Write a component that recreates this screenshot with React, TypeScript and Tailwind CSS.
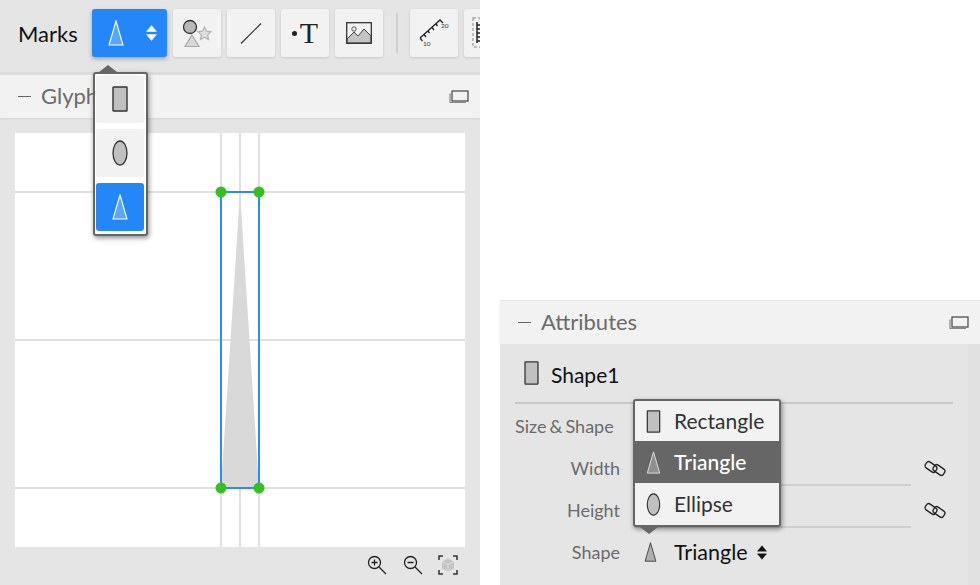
const font = { fontFamily: "Lato, 'Open Sans', sans-serif" };

const RectIcon = ({ w = 16, h = 26, fill = "#c0c0c0" }: { w?: number; h?: number; fill?: string }) => (
  <svg width={w} height={h} viewBox="0 0 16 26">
    <rect x="1" y="1" width="14" height="24" rx="0.5" fill={fill} stroke="#333" strokeWidth="1.4" />
  </svg>
);

const EllipseIcon = ({ w = 16, h = 26 }: { w?: number; h?: number }) => (
  <svg width={w} height={h} viewBox="0 0 16 26">
    <ellipse cx="8" cy="13" rx="7" ry="12" fill="#c0c0c0" stroke="#333" strokeWidth="1.3" />
  </svg>
);

const TriangleIcon = ({ w = 16, h = 26, stroke = "#fff", fill = "#5ba6f9" }: { w?: number; h?: number; stroke?: string; fill?: string }) => (
  <svg width={w} height={h} viewBox="0 0 16 26">
    <path d="M8 1 L15 25 L1 25 Z" fill={fill} stroke={stroke} strokeWidth="1.1" />
  </svg>
);

const UpDown = ({ color = "#fff", w = 11, h = 16 }: { color?: string; w?: number; h?: number }) => (
  <svg width={w} height={h} viewBox="0 0 11 16">
    <path d="M5.5 0.5 L10.5 6.5 L0.5 6.5 Z M0.5 9.5 L10.5 9.5 L5.5 15.5 Z" fill={color} stroke={color} strokeWidth="0.5" strokeLinejoin="round" />
  </svg>
);

const Minimize = () => <div className="w-[13px] h-px bg-[#666]" />;

const PanelIcon = () => (
  <svg width="20" height="14" viewBox="0 0 20 14" fill="none">
    <path d="M1 3.5 V12.5 H17" stroke="#888" strokeWidth="1.2" />
    <rect x="3" y="1" width="16" height="10" stroke="#444" strokeWidth="1.2" fill="none" />
  </svg>
);

const ToolButton = ({ children }: { children: React.ReactNode }) => (
  <div className="w-12 h-12 shrink-0 rounded-[3px] bg-[#f2f2f2] shadow-[0_1px_3px_rgba(0,0,0,0.12)] flex items-center justify-center">
    {children}
  </div>
);

const LinkIcon = () => (
  <svg width="22" height="17" viewBox="0 0 22 17" fill="none" stroke="#222" strokeWidth="1.3">
    <rect x="1" y="3.5" width="12" height="7" rx="2.5" transform="rotate(35 7 7)" />
    <rect x="9" y="6.5" width="12" height="7" rx="2.5" transform="rotate(35 15 10)" />
  </svg>
);

const Panel = ({ title }: { title: string }) => (
  <div className="h-[43px] shrink-0 bg-[#f2f2f2] flex items-center pl-[18px] pr-[11px] shadow-[0_1px_2px_rgba(0,0,0,0.08)]">
    <Minimize />
    <span className="ml-[10px] text-[22px] text-[#6b6b6b] pb-[2px]">{title}</span>
    <div className="ml-auto flex">
      <PanelIcon />
    </div>
  </div>
);

const Canvas = () => (
  <svg width="450" height="414" viewBox="0 0 450 414" className="block">
    <rect width="450" height="414" fill="#fff" />
    <g stroke="#e0e0e0" strokeWidth="2">
      <path d="M0 59 H450 M0 207 H450 M0 355 H450" />
      <path d="M206 0 V414 M225 0 V414 M244 0 V414" />
    </g>
    <path d="M225 59 L244 355 L206 355 Z" fill="#d9d9d9" />
    <rect x="206" y="59" width="38" height="296" fill="none" stroke="#2b8cf5" strokeWidth="2" />
    <g fill="#35c01f">
      <circle cx="206" cy="59" r="5.5" />
      <circle cx="244" cy="59" r="5.5" />
      <circle cx="206" cy="355" r="5.5" />
      <circle cx="244" cy="355" r="5.5" />
    </g>
  </svg>
);

const MarksMenu = () => (
  <div className="absolute left-[93px] top-[72px] w-[55px] h-[164px] bg-white border-2 border-[#666] rounded-[3px] shadow-[1px_2px_5px_rgba(0,0,0,0.45)] pl-px pr-[2px] pt-px flex flex-col gap-[6px]">
    <div className="absolute -top-[9px] left-[4px] w-0 h-0 border-l-[9px] border-r-[9px] border-b-[7px] border-l-transparent border-r-transparent border-b-[#666]" />
    <div className="h-12 rounded-[3px] bg-[#f2f2f2] flex items-center justify-center"><RectIcon /></div>
    <div className="h-12 rounded-[3px] bg-[#f2f2f2] flex items-center justify-center"><EllipseIcon /></div>
    <div className="h-12 rounded-[3px] bg-[#2387f7] flex items-center justify-center"><TriangleIcon /></div>
  </div>
);

const ShapeMenu = () => (
  <div className="absolute left-[133px] top-[55px] w-[148px] h-[128px] bg-[#f2f2f2] border-2 border-[#666] rounded-[3px] shadow-[1px_2px_5px_rgba(0,0,0,0.45)] text-[21px] text-[#333]">
    <div className="h-[40px] flex items-center pl-[11px] gap-[13px]"><RectIcon w={15} h={23} /><span>Rectangle</span></div>
    <div className="h-[42px] flex items-center pl-[11px] gap-[13px] bg-[#666] text-white font-medium">
      <TriangleIcon w={15} h={23} stroke="#ddd" fill="#909090" /><span>Triangle</span>
    </div>
    <div className="h-[42px] flex items-center pl-[11px] gap-[13px]"><EllipseIcon w={15} h={23} /><span>Ellipse</span></div>
    <div className="absolute -bottom-[9px] left-[5px] w-0 h-0 border-l-[9px] border-r-[9px] border-t-[7px] border-l-transparent border-r-transparent border-t-[#666]" />
  </div>
);

const Row = ({ label, children }: { label: string; children?: React.ReactNode }) => (
  <div className="h-[42px] flex items-center">
    <span className="w-[120px] shrink-0 text-right text-[18px] text-[#6b6b6b]">{label}</span>
    {children}
  </div>
);

export default function App() {
  return (
    <div className="w-[980px] h-[585px] bg-white flex overflow-hidden" style={font}>
      <div className="relative w-[480px] h-full bg-[#e5e5e5] flex flex-col overflow-hidden">
        <div className="h-[72px] shrink-0 flex items-center pl-[18px] pb-[6px]">
          <span className="w-[74px] shrink-0 text-[22px] text-[#111]">Marks</span>
          <div className="w-[75px] h-12 shrink-0 rounded-[3px] bg-[#2387f7] shadow-[0_2px_4px_rgba(0,0,0,0.3)] flex items-center pl-[16px] pr-[10px] justify-between">
            <TriangleIcon />
            <UpDown />
          </div>
          <div className="flex gap-[6px] ml-[6px] shrink-0">
            <ToolButton>
              <svg width="30" height="30" viewBox="0 0 30 30">
                <path d="M10 17 L17 28.5 L3 28.5 Z" fill="#d8d8d8" stroke="#aaa" strokeWidth="1.2" />
                <circle cx="8" cy="9" r="6.5" fill="#b8b8b8" stroke="#333" strokeWidth="1.3" />
                <path d="M22.5 9 L24.4 13.2 L29 13.8 L25.6 16.9 L26.6 21.5 L22.5 19.2 L18.4 21.5 L19.4 16.9 L16 13.8 L20.6 13.2 Z" fill="#e0e0e0" stroke="#b4b4b4" strokeWidth="1.2" />
              </svg>
            </ToolButton>
            <ToolButton>
              <svg width="22" height="22" viewBox="0 0 22 22"><path d="M1 21.5 L21 1.5" stroke="#333" strokeWidth="1.2" /></svg>
            </ToolButton>
            <ToolButton>
              <span className="flex items-center text-[#222]">
                <span className="w-[5px] h-[5px] rounded-full bg-[#222] mr-[3px]" />
                <span className="text-[30px] leading-none" style={{ fontFamily: "'Liberation Serif', serif" }}>T</span>
              </span>
            </ToolButton>
            <ToolButton>
              <svg width="26" height="22" viewBox="0 0 26 22">
                <path d="M1 17 L8 10 L12 14 L18 7 L25 14 V21 H1 Z" fill="#c4c4c4" stroke="#444" strokeWidth="1" />
                <rect x="0.7" y="0.7" width="24.6" height="20.6" fill="none" stroke="#333" strokeWidth="1.3" />
                <circle cx="8" cy="7" r="2.2" fill="none" stroke="#555" strokeWidth="1" />
              </svg>
            </ToolButton>
          </div>
          <div className="w-[2px] h-[40px] bg-[#cfcfcf] ml-[13px] mr-[12px] shrink-0" />
          <div className="flex gap-[6px] shrink-0">
            <ToolButton>
              <span className="relative w-8 h-8 flex">
                <svg width="32" height="32" viewBox="0 0 32 32" fill="none" stroke="#222" strokeWidth="1.3">
                  <path d="M2 21 L22 3 L25 6 M2 21 L4.5 24 M6 17.5 L8 20 M10 14 L11.5 16 M14 10.5 L16 13 M18 7 L19.5 9" />
                  <text x="23" y="11" fontSize="6.5" fill="#333" stroke="none" style={font}>20</text>
                  <text x="5" y="29" fontSize="6.5" fill="#333" stroke="none" style={font}>10</text>
                </svg>
              </span>
            </ToolButton>
            <ToolButton>
              <svg width="48" height="48" viewBox="0 0 48 48" fill="none">
                <rect x="9" y="9" width="30" height="29" stroke="#aaa" strokeWidth="1.5" strokeDasharray="3 2" />
                <path d="M13 13 V34" stroke="#222" strokeWidth="1.5" />
                <path d="M13 16 H16 M13 20 H16 M13 24 H16 M13 28 H16 M13 32 H16" stroke="#222" strokeWidth="1.5" />
              </svg>
            </ToolButton>
          </div>
        </div>
        <div className="h-[3px] shrink-0 bg-[#dcdcdc]" />
        <Panel title="Glyph" />
        <div className="pt-[15px] px-[15px]">
          <Canvas />
        </div>
        <div className="flex justify-end items-center gap-[14px] pr-[22px] pt-[7px]">
          <svg width="22" height="22" viewBox="0 0 22 22" fill="none" stroke="#222" strokeWidth="1.3">
            <circle cx="8.5" cy="8.5" r="6" />
            <path d="M5.5 8.5 H11.5 M8.5 5.5 V11.5 M13 13 L20 20" />
          </svg>
          <svg width="22" height="22" viewBox="0 0 22 22" fill="none" stroke="#222" strokeWidth="1.3">
            <circle cx="8.5" cy="8.5" r="6" />
            <path d="M5.5 8.5 H11.5 M13 13 L20 20" />
          </svg>
          <svg width="20" height="20" viewBox="0 0 20 20" fill="none">
            <path d="M1 5 V1 H5 M15 1 H19 V5 M19 15 V19 H15 M5 19 H1 V15" stroke="#333" strokeWidth="1.5" />
            <path d="M10 3.5 L16 6.5 V13.5 L10 16.5 L4 13.5 V6.5 Z" fill="#c4c4c4" />
            <path d="M4 6.5 L10 9.5 L16 6.5 M10 9.5 V16.5" stroke="#e5e5e5" strokeWidth="0.8" />
          </svg>
        </div>
        <MarksMenu />
      </div>

      <div className="w-5 shrink-0" />

      <div className="w-[480px] h-full flex flex-col pt-[300px]">
        <div className="h-px bg-[#e6e6e6]" />
        <Panel title="Attributes" />
        <div className="relative flex-1 bg-[#e5e5e5] border-r-[12px] border-[#e1e1e1]">
          <div className="h-[60px] mx-[15px] w-[438px] flex items-center border-b-2 border-[#c8c8c8] pl-[9px] gap-[12px]">
            <RectIcon w={15} h={24} />
            <span className="text-[21px] text-[#111] mt-[3px]">Shape1</span>
          </div>
          <div className="pl-[15px] pt-[3px] h-[41px] flex items-center text-[18px] text-[#6b6b6b] [word-spacing:-1.5px]">Size &amp; Shape</div>
          <div className="mt-[2px]">
            <Row label="Width">
              <div className="ml-[14px] w-[277px] h-[39px] self-start border-b-2 border-[#cfcfcf]" />
              <div className="ml-[13px] flex"><LinkIcon /></div>
            </Row>
            <Row label="Height">
              <div className="ml-[14px] w-[277px] h-[39px] self-start border-b-2 border-[#cfcfcf]" />
              <div className="ml-[13px] flex"><LinkIcon /></div>
            </Row>
            <Row label="Shape">
              <div className="ml-[24px] flex">
                <TriangleIcon w={13} h={20} stroke="#333" fill="#b0b0b0" />
              </div>
              <span className="ml-[17px] text-[21.5px] text-[#111]">Triangle</span>
              <div className="ml-[9px] flex"><UpDown color="#111" w={10} h={15} /></div>
            </Row>
          </div>
          <ShapeMenu />
        </div>
      </div>
    </div>
  );
}
